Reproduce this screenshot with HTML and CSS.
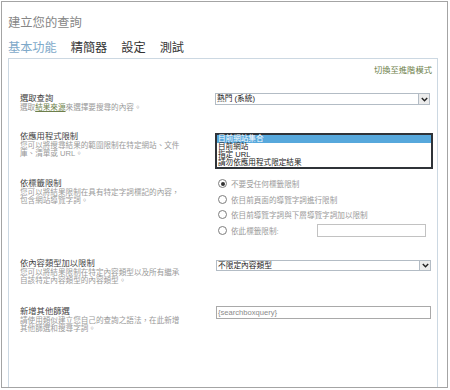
FILE: index.html
```html
<!DOCTYPE html>
<html lang="zh-Hant">
<head>
<meta charset="utf-8">
<link rel="stylesheet" href="styles.css">
</head>
<body>
<div class="window">
  <div class="title">建立您的查詢</div>
  <div class="tabs">
    <span class="tab active">基本功能</span>
    <span class="tab">精簡器</span>
    <span class="tab">設定</span>
    <span class="tab">測試</span>
  </div>
  <div class="panel">
    <div class="mode"><a class="link">切換至進階模式</a></div>

    <div class="row r1">
      <div class="left">
        <div class="label">選取查詢</div>
        <div class="desc">選取<a class="link ul">結果來源</a>來選擇要搜尋的內容。</div>
      </div>
      <div class="right">
        <div class="select s1"><span class="sel-text">熱門 (系統)</span><span class="arrow"><svg width="7" height="5" viewBox="0 0 7 5"><path d="M0.8 1 L3.5 3.8 L6.2 1" fill="none" stroke="#222" stroke-width="1.4"/></svg></span></div>
      </div>
    </div>

    <div class="row r2">
      <div class="left">
        <div class="label">依應用程式限制</div>
        <div class="desc">您可以將搜尋結果的範圍限制在特定網站、文件庫、清單或 URL。</div>
      </div>
      <div class="right">
        <div class="listbox">
          <div class="opt selected">目前網站集合</div>
          <div class="opt">目前網站</div>
          <div class="opt">指定 URL</div>
          <div class="opt">請勿依應用程式限定結果</div>
        </div>
      </div>
    </div>

    <div class="row r3">
      <div class="left">
        <div class="label">依標籤限制</div>
        <div class="desc">您可以將結果限制在具有特定字詞標記的內容，包含網站導覽字詞。</div>
      </div>
      <div class="right">
        <div class="radios">
          <div class="radio-row"><span class="radio checked"></span><span>不要受任何標籤限制</span></div>
          <div class="radio-row"><span class="radio"></span><span>依目前頁面的導覽字詞進行限制</span></div>
          <div class="radio-row"><span class="radio"></span><span>依目前導覽字詞與下層導覽字詞加以限制</span></div>
          <div class="radio-row"><span class="radio"></span><span class="tag-label">依此標籤限制:</span><span class="tag-input"></span></div>
        </div>
      </div>
    </div>

    <div class="row r4">
      <div class="left">
        <div class="label">依內容類型加以限制</div>
        <div class="desc">您可以將結果限制在特定內容類型以及所有繼承自該特定內容類型的內容類型。</div>
      </div>
      <div class="right">
        <div class="select s4"><span class="sel-text">不限定內容類型</span><span class="arrow"><svg width="7" height="5" viewBox="0 0 7 5"><path d="M0.8 1 L3.5 3.8 L6.2 1" fill="none" stroke="#222" stroke-width="1.4"/></svg></span></div>
      </div>
    </div>

    <div class="row r5">
      <div class="left">
        <div class="label">新增其他篩選</div>
        <div class="desc">請使用類似建立您自己的查詢之語法，在此新增其他篩選和搜尋字詞。</div>
      </div>
      <div class="right">
        <div class="textbox">{searchboxquery}</div>
      </div>
    </div>
  </div>
</div>
</body>
</html>
```

FILE: styles.css
```css
html, body {
  margin: 0;
  padding: 0;
  background: #ffffff;
}
body {
  font-family: "Noto Sans CJK TC", "Noto Sans", sans-serif;
  color: #333;
}
.window {
  box-sizing: border-box;
  margin: 1px 0 0 1px;
  width: 447px;
  height: 387px;
  border: 1px solid #a4a4a4;
  overflow: hidden;
}
.title {
  margin: 12px 0 0 6px;
  font-size: 12.3px;
  line-height: 16px;
  color: #858585;
}
.tabs {
  display: flex;
  gap: 14px;
  margin: 9px 0 0 6px;
  font-size: 12.2px;
  line-height: 16px;
}
.tab { color: #333; }
.tab.active { color: #7ea9c9; }
.panel {
  margin: 3px 0 0 6px;
  width: 430px;
  height: 400px;
  box-sizing: border-box;
  border: 1px solid #ccd8e2;
  border-bottom: none;
  padding: 6px 5px 0 11px;
  font-family: "Liberation Sans", "Noto Sans CJK TC", sans-serif;
}
.mode {
  display: flex;
  justify-content: flex-end;
  font-size: 8.3px;
  line-height: 10px;
}
.link { color: #6e7f4c; }
.ul { text-decoration: underline; }
.row {
  display: flex;
}
.r1 { margin-top: 18px; height: 38px; }
.r2 { height: 47px; }
.r3 { height: 80px; }
.r4 { height: 48px; }
.left { width: 195px; flex: none; }
.right { width: 215px; flex: none; }
.label {
  font-size: 8.3px;
  line-height: 10px;
  color: #444;
}
.desc {
  width: 163px;
  margin-top: 0.5px;
  font-size: 7.6px;
  line-height: 8.8px;
  color: #9a9a9a;
}
.select {
  box-sizing: border-box;
  display: flex;
  align-items: stretch;
  border: 1px solid #b3bcc5;
  background: #fff;
}
.s1 { width: 215px; height: 12px; }
.s4 { width: 215px; height: 11px; margin: 2px 0 0 1px; }
.sel-text {
  flex: 1;
  font-size: 7.7px;
  line-height: 10px;
  padding-left: 1px;
  color: #222;
}
.s4 .sel-text { line-height: 9px; }
.arrow {
  width: 11px;
  box-sizing: border-box;
  border-left: 1px solid #b3bcc5;
  background: #ececec;
  display: flex;
  align-items: center;
  justify-content: center;
}
.listbox {
  box-sizing: border-box;
  margin-top: 2px;
  width: 218px;
  height: 36px;
  border: 2px solid #2f3338;
  background: #fff;
}
.opt {
  font-size: 7.6px;
  line-height: 8px;
  height: 8px;
  color: #222;
  padding-left: 1px;
  white-space: nowrap;
}
.opt.selected {
  background: #57a8dc;
  color: #fff;
}
.radios { margin-top: -2px; }
.radio-row {
  display: flex;
  align-items: center;
  height: 15.5px;
  font-size: 7.6px;
  color: #9a9a9a;
}
.radio {
  box-sizing: border-box;
  width: 9px;
  height: 9px;
  border-radius: 50%;
  border: 1px solid #7d7d7d;
  margin: 0 4px 0 3px;
  display: flex;
  align-items: center;
  justify-content: center;
  flex: none;
}
.radio.checked::after {
  content: "";
  width: 4px;
  height: 4px;
  border-radius: 50%;
  background: #333;
}
.tag-label { width: 86px; }
.tag-input {
  box-sizing: border-box;
  width: 109px;
  height: 13px;
  border: 1px solid #c2c2c2;
  background: #fff;
}
.textbox {
  box-sizing: border-box;
  width: 215px;
  height: 13px;
  margin-left: 1px;
  border: 1px solid #a9a9a9;
  font-size: 7.6px;
  line-height: 11px;
  color: #8a8a8a;
  padding-left: 1px;
}
```
